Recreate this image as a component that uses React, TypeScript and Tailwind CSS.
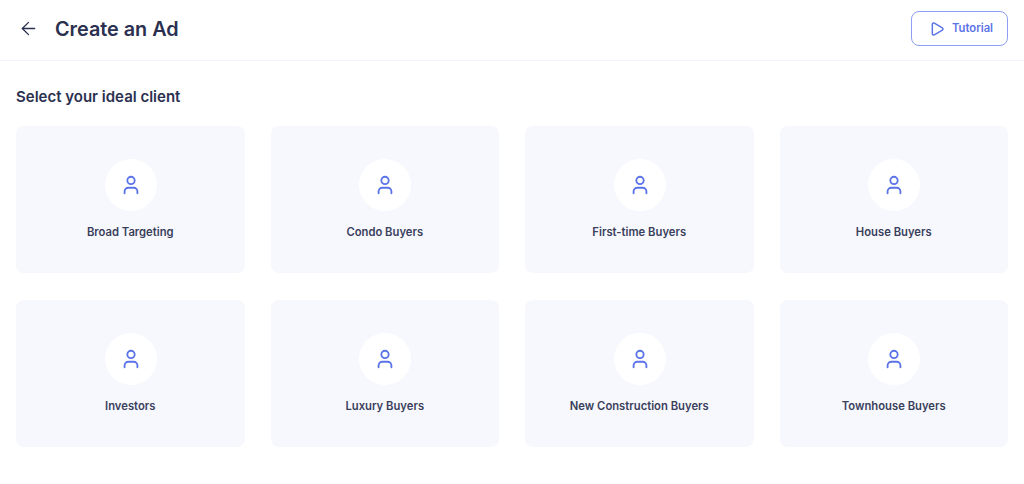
import { ArrowLeft, Play, User } from 'lucide-react';

const clients = [
  'Broad Targeting',
  'Condo Buyers',
  'First-time Buyers',
  'House Buyers',
  'Investors',
  'Luxury Buyers',
  'New Construction Buyers',
  'Townhouse Buyers',
];

export default function App() {
  return (
    <div className="h-[484px] w-[1024px] overflow-hidden bg-white font-['Inter',sans-serif] text-[#2b3050]">
      <header className="flex h-[61px] items-center justify-between border-b border-[#f3f4fb] pr-4 pb-[3px] pl-[18px]">
        <div className="flex items-center gap-[16px]">
          <ArrowLeft className="h-[21px] w-[21px]" strokeWidth={1.5} />
          <h1 className="text-[19.8px] leading-7 font-semibold">Create an Ad</h1>
        </div>
        <button className="flex h-[35px] w-[97px] items-center justify-center gap-[7px] rounded-lg border border-[#8d9ff2] pl-[3px] text-[11.25px] font-semibold text-[#5b73e8]">
          <Play className="h-4 w-4" strokeWidth={2.2} />
          Tutorial
        </button>
      </header>
      <main className="px-4 pt-[26px]">
        <h2 className="text-[15px] leading-[20px] font-semibold">Select your ideal client</h2>
        <div className="mt-[19px] grid grid-cols-4 gap-x-[26px] gap-y-[27px]">
          {clients.map((client) => (
            <div
              key={client}
              className="flex h-[147px] flex-col items-center rounded-lg bg-[#f7f8fd] pt-[33px]"
            >
              <div className="ml-[0.5px] flex h-[52px] w-[52px] items-center justify-center rounded-full bg-white">
                <User className="h-[22px] w-[22px] text-[#5b73e8]" strokeWidth={2} />
              </div>
              <p className="mt-[13px] text-[11.25px] leading-4 font-semibold text-[#3a3f5c]">{client}</p>
            </div>
          ))}
        </div>
      </main>
    </div>
  );
}
